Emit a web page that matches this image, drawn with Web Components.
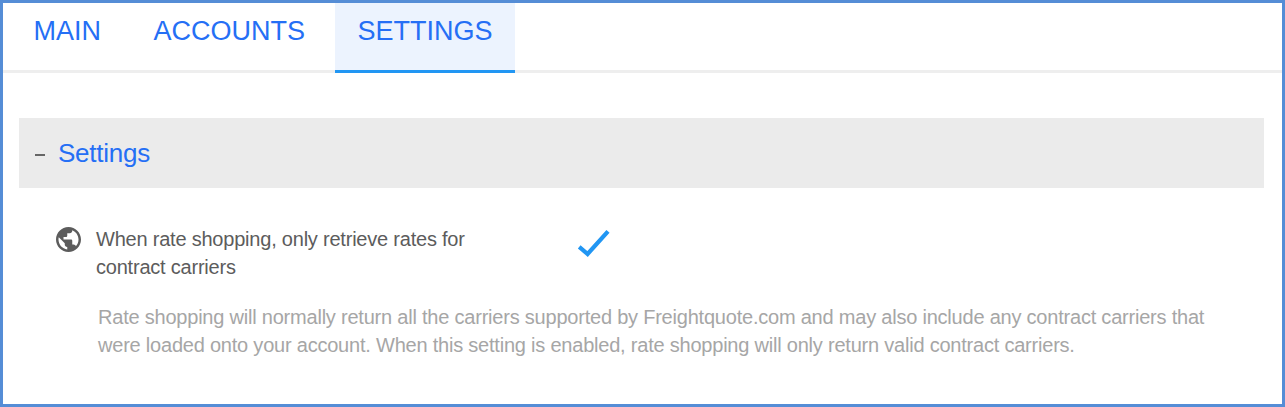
<!DOCTYPE html>
<html lang="en">
<head>
<meta charset="utf-8">
<title>Settings</title>
<style>
body { margin: 0; font-family: "Liberation Sans", Arial, sans-serif; }
</style>
</head>
<body>
<settings-page>
  <tab-bar slot="tabs">
    <tab-item>MAIN</tab-item>
    <tab-item>ACCOUNTS</tab-item>
    <tab-item active>SETTINGS</tab-item>
  </tab-bar>
  <settings-panel>
    <span slot="title">Settings</span>
    <setting-row>
      <span slot="label">When rate shopping, only retrieve rates for<br>contract carriers</span>
      <span slot="description">Rate shopping will normally return all the carriers supported by Freightquote.com and may also include any contract carriers that<br>were loaded onto your account. When this setting is enabled, rate shopping will only return valid contract carriers.</span>
    </setting-row>
  </settings-panel>
</settings-page>
<script>
function define(name, html) {
  customElements.define(name, class extends HTMLElement {
    constructor() {
      super();
      this.attachShadow({ mode: "open" }).innerHTML = html;
    }
  });
}

define("settings-page", `
  <style>
    :host { display: flex; flex-direction: column; box-sizing: border-box; height: 407px; border: 3px solid #558dd6; background: #fff; overflow: hidden; }
    main { padding: 45px 18px 0 16px; }
  </style>
  <slot name="tabs"></slot>
  <main><slot></slot></main>`);

define("tab-bar", `
  <style>
    :host { display: flex; gap: 7.5px; height: 70px; padding-left: 7.5px; background: linear-gradient(#eee, #eee) bottom / 100% 3px no-repeat; }
  </style>
  <slot></slot>`);

define("tab-item", `
  <style>
    :host { display: block; box-sizing: border-box; padding: 12px 22px 0 23px; border-bottom: 3px solid transparent; font-size: 27px; line-height: 32px; color: #256ff5; white-space: nowrap; }
    :host([active]) { background: #ecf3fe; border-bottom-color: #2196f3; background-clip: padding-box; }
  </style>
  <slot></slot>`);

define("settings-panel", `
  <style>
    :host { display: block; }
    header { display: flex; align-items: center; height: 70px; background: #ebebeb; color: #256ff5; font-size: 26px; letter-spacing: -0.25px; }
    i { width: 10px; height: 2px; margin: 3px 13px 0 16px; background: #666; }
  </style>
  <header><i></i><slot name="title"></slot></header>
  <slot></slot>`);

define("setting-row", `
  <style>
    :host { display: block; padding: 37px 0 0 34px; font-size: 20px; line-height: 28px; letter-spacing: -0.215px; white-space: nowrap; }
    .row { display: flex; align-items: flex-start; color: #5c5c5c; }
    .label { width: 480px; margin-left: 12px; }
    .globe { margin-right: 1px; margin-top: -1px; }
    .check { margin-top: 3px; }
    .description { margin: 22px 0 0 45px; color: #a6a6a6; }
    svg { display: block; flex: none; }
  </style>
  <div class="row">
    <svg class="globe" width="30" height="30" viewBox="-.4 -.4 24 24" fill="#5c5c5c"><path d="M12 2C6.48 2 2 6.48 2 12s4.48 10 10 10 10-4.48 10-10S17.52 2 12 2zm-1 17.93c-3.95-.49-7-3.85-7-7.93 0-.62.08-1.21.21-1.79L9 15v1c0 1.1.9 2 2 2v1.93zm6.9-2.54c-.26-.81-1-1.39-1.9-1.39h-1v-3c0-.55-.45-1-1-1H8v-2h2c.55 0 1-.45 1-1V7h2c1.1 0 2-.9 2-2v-.41c2.93 1.19 5 4.06 5 7.41 0 2.08-.8 3.97-2.1 5.39z"/></svg>
    <div class="label"><slot name="label"></slot></div>
    <svg class="check" width="36" height="32" viewBox="0 0 36 32" fill="none" stroke="#2196f3" stroke-width="4.2"><path d="M3.2 18.8L11.6 26L32 3.4"/></svg>
  </div>
  <div class="description"><slot name="description"></slot></div>`);
</script>
</body>
</html>
